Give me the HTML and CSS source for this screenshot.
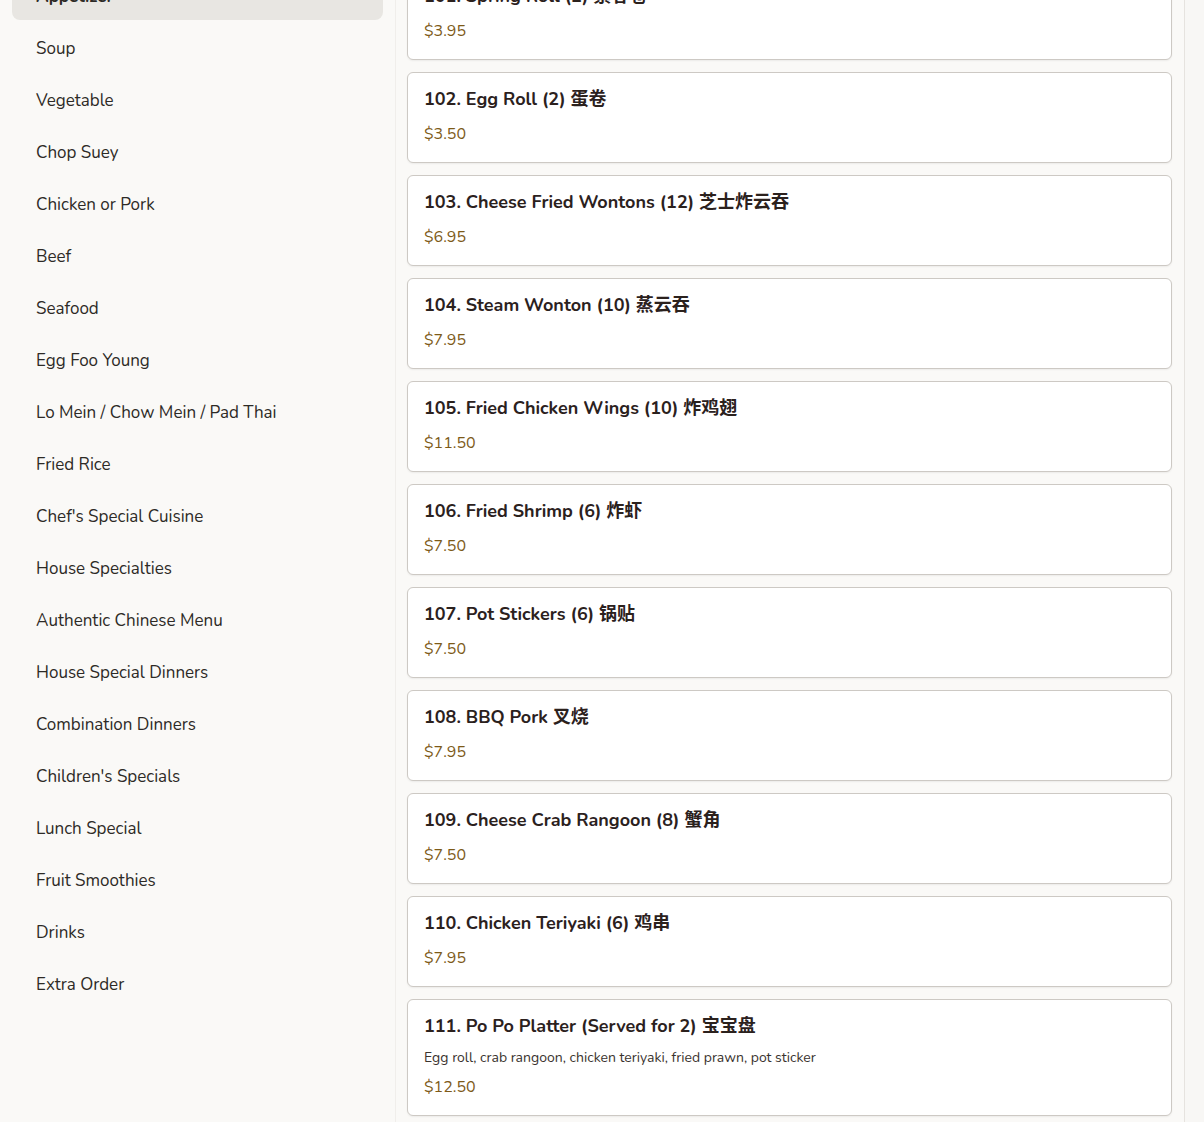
FILE: index.html
```html
<!DOCTYPE html>
<html>
<head>
    <meta charset="utf-8">
    <title>Menu</title>
    <link rel="stylesheet" href="styles.css">
</head>
<body>
    <div class="menu">
        <nav class="categories">
            <ul class="categories__list">
                <li class="category category--active">Appetizer</li>
                <li class="category">Soup</li>
                <li class="category">Vegetable</li>
                <li class="category">Chop Suey</li>
                <li class="category">Chicken or Pork</li>
                <li class="category">Beef</li>
                <li class="category">Seafood</li>
                <li class="category">Egg Foo Young</li>
                <li class="category">Lo Mein / Chow Mein / Pad Thai</li>
                <li class="category">Fried Rice</li>
                <li class="category">Chef's Special Cuisine</li>
                <li class="category">House Specialties</li>
                <li class="category">Authentic Chinese Menu</li>
                <li class="category">House Special Dinners</li>
                <li class="category">Combination Dinners</li>
                <li class="category">Children's Specials</li>
                <li class="category">Lunch Special</li>
                <li class="category">Fruit Smoothies</li>
                <li class="category">Drinks</li>
                <li class="category">Extra Order</li>
            </ul>
        </nav>

        <main class="items">
            <div class="items__list">
                <div class="item">
                    <div class="item__name">101. Spring Roll (2) 素春卷</div>
                    <div class="item__price">$3.95</div>
                </div>
                <div class="item">
                    <div class="item__name">102. Egg Roll (2) 蛋卷</div>
                    <div class="item__price">$3.50</div>
                </div>
                <div class="item">
                    <div class="item__name">103. Cheese Fried Wontons (12) 芝士炸云吞</div>
                    <div class="item__price">$6.95</div>
                </div>
                <div class="item">
                    <div class="item__name">104. Steam Wonton (10) 蒸云吞</div>
                    <div class="item__price">$7.95</div>
                </div>
                <div class="item">
                    <div class="item__name">105. Fried Chicken Wings (10) 炸鸡翅</div>
                    <div class="item__price">$11.50</div>
                </div>
                <div class="item">
                    <div class="item__name">106. Fried Shrimp (6) 炸虾</div>
                    <div class="item__price">$7.50</div>
                </div>
                <div class="item">
                    <div class="item__name">107. Pot Stickers (6) 锅贴</div>
                    <div class="item__price">$7.50</div>
                </div>
                <div class="item">
                    <div class="item__name">108. BBQ Pork 叉烧</div>
                    <div class="item__price">$7.95</div>
                </div>
                <div class="item">
                    <div class="item__name">109. Cheese Crab Rangoon (8) 蟹角</div>
                    <div class="item__price">$7.50</div>
                </div>
                <div class="item">
                    <div class="item__name">110. Chicken Teriyaki (6) 鸡串</div>
                    <div class="item__price">$7.95</div>
                </div>
                <div class="item">
                    <div class="item__name">111. Po Po Platter (Served for 2) 宝宝盘</div>
                    <div class="item__desc">Egg roll, crab rangoon, chicken teriyaki, fried prawn, pot sticker</div>
                    <div class="item__price">$12.50</div>
                </div>
            </div>
        </main>

        <div class="scrolltrack"></div>
    </div>
</body>
</html>
```

FILE: styles.css
```css
html,
body {
    margin: 0;
    padding: 0;
    height: 100%;
    overflow: hidden;
}
body {
    background: #faf9f7;
    color: #2d2620;
    font-family: "Nunito", "Lato", "Noto Sans", "Noto Sans CJK SC", sans-serif;
}

.menu {
    display: flex;
    height: 1122px;
    overflow: hidden;
}

/* left column */
.categories {
    width: 371px;
    flex-shrink: 0;
    padding: 0 12px;
    border-right: 1px solid #f0eeeb;
    background: #faf9f7;
}
.categories__list {
    list-style: none;
    margin: -28px 0 0;
    padding: 0;
    display: flex;
    flex-direction: column;
    gap: 4px;
}
.category {
    box-sizing: border-box;
    height: 48px;
    line-height: 47px;
    padding: 1px 24px 0;
    border-radius: 8px;
    font-size: 17px;
    color: #2d2a26;
}
.category--active {
    background: #e8e6e2;
    font-weight: bold;
}

/* right column */
.items {
    flex: 1;
    padding: 0 12px 0 11px;
}
.items__list {
    margin-top: -31px;
    display: flex;
    flex-direction: column;
    gap: 12px;
}
.item {
    background: #fff;
    border: 1px solid #cdc9c4;
    border-radius: 6px;
    box-shadow: 0 1px 2px rgba(0, 0, 0, 0.06);
    padding: 14px 16px 18px;
}
.item__name {
    font-size: 18px;
    font-weight: bold;
    line-height: 24px;
    color: #2b211d;
}
.item__desc {
    margin-top: 11px;
    font-size: 14px;
    line-height: 18px;
    color: #3a332e;
}
.item__price {
    margin-top: 13px;
    font-size: 16px;
    line-height: 20px;
    color: #7d5a18;
}
.item__desc + .item__price {
    margin-top: 10px;
}

.scrolltrack {
    width: 19px;
    flex-shrink: 0;
    border-left: 1px solid #e6e3df;
    background: #f8f7f5;
}
```
